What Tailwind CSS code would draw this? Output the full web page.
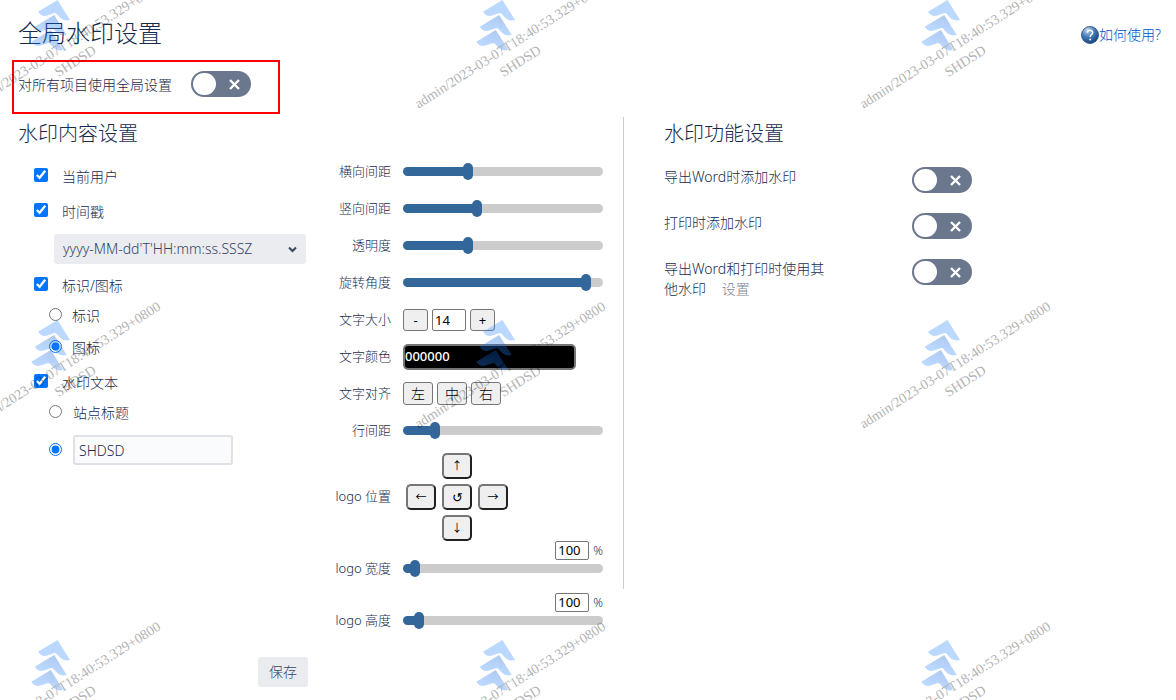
<!DOCTYPE html>
<html lang="zh-CN">

<head>
    <meta charset="UTF-8">
    <meta name="viewport" content="width=device-width, initial-scale=1.0">
    <title>全局水印设置</title>
    <script src="https://cdn.jsdelivr.net/npm/@tailwindcss/browser@4"></script>
    <style>
        body {
            font-family: "Noto Sans", "Noto Sans CJK SC", sans-serif;
        }

        .slider {
            appearance: none;
            display: block;
            width: 200px;
            height: 9px;
            border-radius: 5px;
            background: #ccc linear-gradient(#369, #369) no-repeat;
        }

        .slider::-webkit-slider-runnable-track {
            height: 9px;
        }

        .slider::-webkit-slider-thumb {
            appearance: none;
            width: 10px;
            height: 17px;
            margin-top: -4px;
            border-radius: 5px;
            background: #369;
        }
    </style>
</head>

<body class="relative min-h-screen overflow-hidden bg-white text-sm leading-5 font-light text-[#172b4d]">
    <header class="flex items-center justify-between pt-3 pr-[15px] pl-[18px]">
        <h1 class="text-2xl leading-[42px] font-light">全局水印设置</h1>
        <a href="#" class="flex items-center pt-1 text-[#0052cc]">
            <svg class="h-[18px] w-[18px]" viewBox="0 0 18 18">
                <defs>
                    <radialGradient id="ball" cx="0.35" cy="0.2" r="0.85">
                        <stop offset="0" stop-color="#c3daf0" />
                        <stop offset="0.45" stop-color="#4a83bd" />
                        <stop offset="1" stop-color="#123f78" />
                    </radialGradient>
                </defs>
                <circle cx="9" cy="9" r="8.5" fill="url(#ball)" stroke="#1c4677" stroke-width="0.8" />
                <path d="M6.3 6.8Q6.5 4.3 9 4.3T11.7 6.7Q11.7 8 10.2 8.9Q9.2 9.6 9.2 11" fill="none" stroke="#fff" stroke-width="1.4" />
                <circle cx="9.2" cy="13.4" r="1" fill="#fff" />
            </svg>
            <span>如何使用?</span>
        </a>
    </header>

    <div class="ml-3 mt-[6px] flex w-[268px] items-start border-2 border-[#ff0000] pt-[9px] pb-[15px] pl-1">
        <label for="useGlobal" class="mr-[19px] mt-1">对所有项目使用全局设置</label>
        <span class="relative">
            <input type="checkbox" role="switch" id="useGlobal" class="block h-[26px] w-[60px] appearance-none rounded-full bg-[#6b778c] before:mt-[2px] before:ml-[2px] before:block before:h-[22px] before:w-[23px] before:rounded-full before:bg-white">
            <svg class="pointer-events-none absolute top-2 right-[11px] h-[11px] w-[11px]" viewBox="0 0 11 11" fill="none" stroke="#fff" stroke-width="2.4"><path d="M1 1L10 10M10 1L1 10" /></svg>
        </span>
    </div>

    <main class="mt-[3px] flex items-start pl-[18px]">
        <!-- 水印内容 -->
        <section class="w-[290px] shrink-0">
            <h2 class="text-xl leading-[34px] font-light">水印内容设置</h2>
            <div class="mt-[11px] pl-4">
                <div class="flex h-7 items-center gap-[14px]">
                    <input type="checkbox" id="showUser" checked class="mb-[2px] h-[14px] w-[14px]">
                    <label for="showUser" class="pt-[2px]">当前用户</label>
                </div>
                <div class="mt-[7px] flex h-7 items-center gap-[14px]">
                    <input type="checkbox" id="showTime" checked class="mb-[2px] h-[14px] w-[14px]">
                    <label for="showTime" class="pt-[2px]">时间戳</label>
                </div>
                <div class="relative mt-[9px] ml-5 w-[252px]">
                    <select aria-label="时间格式" class="h-[30px] w-full appearance-none rounded-[3px] bg-[#ebecf0] pl-[9px] text-[#344563]">
                        <option>yyyy-MM-dd'T'HH:mm:ss.SSSZ</option>
                    </select>
                    <svg class="pointer-events-none absolute top-3 right-[9px] h-[7px] w-[9px]" viewBox="0 0 9 7" fill="none" stroke="#344563" stroke-width="2"><path d="M1 1.5L4.5 5L8 1.5" /></svg>
                </div>
                <div class="mt-[7px] flex h-7 items-center gap-[14px]">
                    <input type="checkbox" id="showMark" checked class="mb-[2px] h-[14px] w-[14px]">
                    <label for="showMark" class="pt-[2px]">标识/图标</label>
                </div>
                <div class="flex h-8 items-center gap-[10px] pl-[15px]">
                    <input type="radio" name="mark" id="markText" class="mb-[2px] h-[13px] w-[13px]">
                    <label for="markText" class="pt-[2px]">标识</label>
                </div>
                <div class="flex h-8 items-center gap-[10px] pl-[15px]">
                    <input type="radio" name="mark" id="markIcon" checked class="mb-[2px] h-[13px] w-[13px]">
                    <label for="markIcon" class="pt-[2px]">图标</label>
                </div>
                <div class="mt-[5px] flex h-7 items-center gap-[14px]">
                    <input type="checkbox" id="showText" checked class="mb-[2px] h-[14px] w-[14px]">
                    <label for="showText" class="pt-[2px]">水印文本</label>
                </div>
                <div class="flex h-8 items-center gap-[11px] pl-[15px]">
                    <input type="radio" name="text" id="siteTitle" class="mb-[2px] h-[13px] w-[13px]">
                    <label for="siteTitle" class="pt-[2px]">站点标题</label>
                </div>
                <div class="flex h-11 items-center gap-[11px] pl-[15px]">
                    <input type="radio" name="text" id="customText" checked aria-label="自定义文本" class="mb-[2px] h-[13px] w-[13px]">
                    <input type="text" value="SHDSD" aria-label="水印文本" class="h-[30px] w-40 rounded-[3px] border-2 border-[#dfe1e6] bg-[#fafbfc] px-1">
                </div>
            </div>
            <button type="button" class="mt-[185px] ml-60 h-[30px] w-[50px] rounded-[3px] bg-[#ebecf0] text-[#344563]">保存</button>
        </section>

        <!-- 水印样式 -->
        <section class="w-[295px] shrink-0 pt-9 text-[13px]">
            <div class="flex h-[37px] items-center gap-3">
                <label for="gapX" class="w-[83px] pb-[2px] text-right">横向间距</label>
                <input type="range" id="gapX" max="190" value="60" class="slider" style="background-size: 65px 100%">
            </div>
            <div class="flex h-[37px] items-center gap-3">
                <label for="gapY" class="w-[83px] pb-[2px] text-right">竖向间距</label>
                <input type="range" id="gapY" max="190" value="69" class="slider" style="background-size: 74px 100%">
            </div>
            <div class="flex h-[37px] items-center gap-3">
                <label for="alpha" class="w-[83px] pb-[2px] text-right">透明度</label>
                <input type="range" id="alpha" max="190" value="60" class="slider" style="background-size: 65px 100%">
            </div>
            <div class="flex h-[37px] items-center gap-3">
                <label for="angle" class="w-[83px] pb-[2px] text-right">旋转角度</label>
                <input type="range" id="angle" max="190" value="178" class="slider" style="background-size: 183px 100%">
            </div>
            <div class="flex h-[37px] items-center gap-3">
                <label for="fontSize" class="w-[83px] pb-[2px] text-right">文字大小</label>
                <div class="flex gap-1 font-normal text-black">
                    <button type="button" class="h-[22px] w-[25px] rounded-[3px] border border-[#767676] bg-[#efefef]">-</button>
                    <input type="text" id="fontSize" value="14" class="h-[22px] w-[34px] rounded-[2px] border border-[#767676] bg-white px-[2px]">
                    <button type="button" class="h-[22px] w-[25px] rounded-[3px] border border-[#767676] bg-[#efefef]">+</button>
                </div>
            </div>
            <div class="flex h-[37px] items-center gap-3">
                <label for="fontColor" class="w-[83px] pb-[2px] text-right">文字颜色</label>
                <input type="text" id="fontColor" value="000000" class="h-[26px] w-[173px] rounded-[5px] border-2 border-[#767676] bg-black pb-[2px] font-medium text-white">
            </div>
            <div class="flex h-[37px] items-center gap-3">
                <span class="w-[83px] pb-[2px] text-right">文字对齐</span>
                <div class="flex gap-1 text-sm text-black">
                    <button type="button" class="h-[23px] w-[30px] rounded-[3px] border border-[#767676] bg-[#efefef]">左</button>
                    <button type="button" class="h-[23px] w-[30px] rounded-[3px] border border-[#767676] bg-[#efefef]">中</button>
                    <button type="button" class="h-[23px] w-[30px] rounded-[3px] border border-[#767676] bg-[#efefef]">右</button>
                </div>
            </div>
            <div class="flex h-[37px] items-center gap-3">
                <label for="lineGap" class="w-[83px] pb-[2px] text-right">行间距</label>
                <input type="range" id="lineGap" max="190" value="27" class="slider" style="background-size: 32px 100%">
            </div>
            <div class="flex items-center gap-[15px] pt-1">
                <span class="w-[83px] pb-[2px] text-right">logo 位置</span>
                <div class="grid grid-cols-3 gap-x-[6px] gap-y-[5px] text-[11px] font-normal text-black">
                    <button type="button" class="col-start-2 h-[26px] w-[30px] rounded-[5px] border-2 border-[#212121] border-t-[#767676] border-l-[#767676] bg-[#efefef] leading-4">↑</button>
                    <button type="button" class="col-start-1 h-[26px] w-[30px] rounded-[5px] border-2 border-[#212121] border-t-[#767676] border-l-[#767676] bg-[#efefef] leading-4">←</button>
                    <button type="button" class="h-[26px] w-[30px] rounded-[5px] border-2 border-[#212121] border-t-[#767676] border-l-[#767676] bg-[#efefef] text-[13px] leading-4">↺</button>
                    <button type="button" class="h-[26px] w-[30px] rounded-[5px] border-2 border-[#212121] border-t-[#767676] border-l-[#767676] bg-[#efefef] leading-4">→</button>
                    <button type="button" class="col-start-2 h-[26px] w-[30px] rounded-[5px] border-2 border-[#212121] border-t-[#767676] border-l-[#767676] bg-[#efefef] leading-4">↓</button>
                </div>
            </div>
            <div class="flex h-[52px] items-start gap-3">
                <label for="logoWidth" class="w-[83px] pt-[17px] text-right">logo 宽度</label>
                <div class="w-[200px]">
                    <div class="flex items-center justify-end gap-1">
                        <input type="text" value="100" aria-label="宽度百分比" class="h-[19px] w-[34px] rounded-[2px] border border-[#767676] bg-white px-[2px] pb-[2px] font-normal text-black">
                        <span class="text-xs leading-[19px]">%</span>
                    </div>
                    <input type="range" id="logoWidth" max="190" value="7" class="slider mt-1" style="background-size: 12px 100%">
                </div>
            </div>
            <div class="flex h-[52px] items-start gap-3">
                <label for="logoHeight" class="w-[83px] pt-[17px] text-right">logo 高度</label>
                <div class="w-[200px]">
                    <div class="flex items-center justify-end gap-1">
                        <input type="text" value="100" aria-label="高度百分比" class="h-[19px] w-[34px] rounded-[2px] border border-[#767676] bg-white px-[2px] pb-[2px] font-normal text-black">
                        <span class="text-xs leading-[19px]">%</span>
                    </div>
                    <input type="range" id="logoHeight" max="190" value="11" class="slider mt-1" style="background-size: 16px 100%">
                </div>
            </div>
        </section>

        <!-- 水印功能 -->
        <section class="ml-5 flex-1">
            <div class="h-[472px] border-l border-[#ccc] pl-10">
                <h2 class="text-xl leading-[34px] font-light">水印功能设置</h2>
                <div class="mt-4 flex h-[46px] items-start">
                    <label for="onExport" class="w-[248px]">导出Word时添加水印</label>
                    <span class="relative">
                        <input type="checkbox" role="switch" id="onExport" class="block h-[26px] w-[60px] appearance-none rounded-full bg-[#6b778c] before:mt-[2px] before:ml-[2px] before:block before:h-[22px] before:w-[23px] before:rounded-full before:bg-white">
                        <svg class="pointer-events-none absolute top-2 right-[11px] h-[11px] w-[11px]" viewBox="0 0 11 11" fill="none" stroke="#fff" stroke-width="2.4"><path d="M1 1L10 10M10 1L1 10" /></svg>
                    </span>
                </div>
                <div class="flex h-[46px] items-start">
                    <label for="onPrint" class="w-[248px]">打印时添加水印</label>
                    <span class="relative">
                        <input type="checkbox" role="switch" id="onPrint" class="block h-[26px] w-[60px] appearance-none rounded-full bg-[#6b778c] before:mt-[2px] before:ml-[2px] before:block before:h-[22px] before:w-[23px] before:rounded-full before:bg-white">
                        <svg class="pointer-events-none absolute top-2 right-[11px] h-[11px] w-[11px]" viewBox="0 0 11 11" fill="none" stroke="#fff" stroke-width="2.4"><path d="M1 1L10 10M10 1L1 10" /></svg>
                    </span>
                </div>
                <div class="flex items-start">
                    <div class="w-[248px] pr-[84px]">
                        <label for="useOther">导出Word和打印时使用其他水印</label>
                        <a href="#" class="ml-3 text-[#7a869a]">设置</a>
                    </div>
                    <span class="relative">
                        <input type="checkbox" role="switch" id="useOther" class="block h-[26px] w-[60px] appearance-none rounded-full bg-[#6b778c] before:mt-[2px] before:ml-[2px] before:block before:h-[22px] before:w-[23px] before:rounded-full before:bg-white">
                        <svg class="pointer-events-none absolute top-2 right-[11px] h-[11px] w-[11px]" viewBox="0 0 11 11" fill="none" stroke="#fff" stroke-width="2.4"><path d="M1 1L10 10M10 1L1 10" /></svg>
                    </span>
                </div>
            </div>
        </section>
    </main>

    <!-- 水印层 -->
    <div id="watermark" class="pointer-events-none absolute -top-10 -left-[60px] grid grid-cols-[445px_445px_445px]" aria-hidden="true">
        <svg class="h-80 w-[445px]" viewBox="0 0 445 320">
            <defs>
                <linearGradient id="fade" x1="0.7" y1="0" x2="0.35" y2="0.75">
                    <stop offset="0" stop-color="#0052cc" />
                    <stop offset="1" stop-color="#2684ff" />
                </linearGradient>
            </defs>
            <g opacity="0.31">
                <path fill="#2684ff" d="M98 51.700L117.500 40L130 60Q124 61.500 120.500 58L116.500 53.800Q115.500 52.500 114 53.200L109.500 54.800Q102 58 98 51.700Z" />
                <path fill="url(#fade)" transform="translate(-3.3 15)" d="M98 51.700L117.500 40L130 60Q124 61.500 120.500 58L116.500 53.800Q115.500 52.500 114 53.200L109.500 54.800Q102 58 98 51.700Z" />
                <path fill="url(#fade)" transform="translate(-6.7 30)" d="M98 51.700L117.500 40L130 60Q124 61.500 120.500 58L116.500 53.800Q115.500 52.500 114 53.200L109.500 54.800Q102 58 98 51.700Z" />
                <g transform="translate(127 88) rotate(-32.500)" fill="#000" font-size="14" font-weight="400" text-anchor="middle" font-family="'Liberation Serif', serif">
                    <text x="0" y="1">admin/2023-03-07T18:40:53.329+0800</text>
                    <text x="0" y="20">SHDSD</text>
                </g>
            </g>
        </svg>
    </div>

    <script>
        // Repeat the watermark tile over the page
        const layer = document.getElementById('watermark');
        const tile = layer.firstElementChild;
        for (let i = 1; i < 9; i++) {
            layer.appendChild(tile.cloneNode(true));
        }

        document.querySelectorAll('.slider').forEach(function (slider) {
            slider.addEventListener('input', function () {
                slider.style.backgroundSize = (Number(slider.value) + 5) + 'px 100%';
            });
        });
    </script>
</body>

</html>
